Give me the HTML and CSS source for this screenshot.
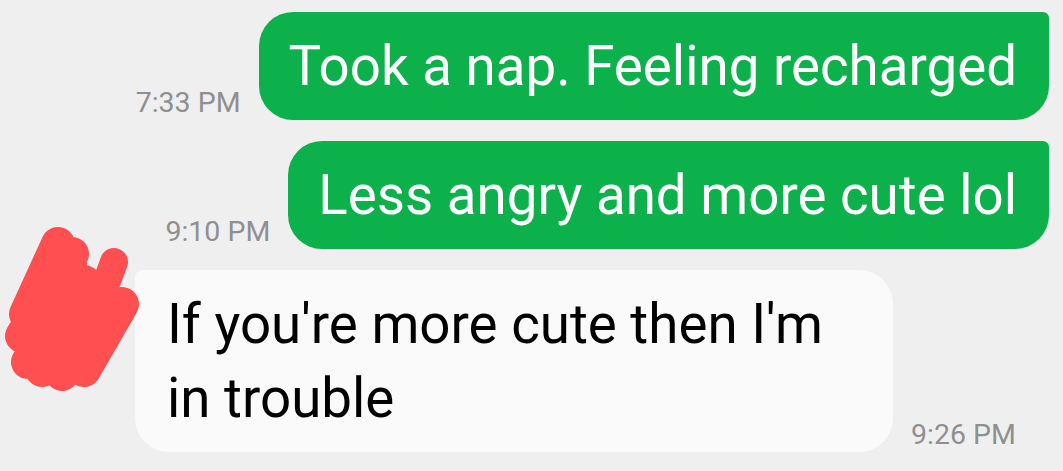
FILE: index.html
```html
<!DOCTYPE html>
<html lang="en">
<head>
    <meta charset="UTF-8">
    <title>Chat</title>
    <link rel="stylesheet" href="styles.css">
</head>
<body>
<div class="chat">
    <div class="row out">
        <span class="time">7:33 PM</span>
        <div class="bubble sent">Took a nap. Feeling recharged</div>
    </div>
    <div class="row out">
        <span class="time">9:10 PM</span>
        <div class="bubble sent">Less angry and more cute lol</div>
    </div>
    <div class="row in">
        <div class="avatar">
            <svg class="scribble" width="150" height="170" viewBox="0 0 150 170">
                <g fill="none" stroke="#ff4f50" stroke-linecap="round" stroke-linejoin="round">
                    <path stroke-width="34" d="M26 90 L58 20 M22 112 L72 30 M28 138 L84 58 M42 146 L96 72 M62 150 L108 92 M84 146 L122 80 M40 60 L70 40"/>
                    <path stroke-width="28" d="M88 108 L114 38"/>
                </g>
            </svg>
        </div>
        <div class="bubble received">If you're more cute then I'm in trouble</div>
        <span class="time">9:26 PM</span>
    </div>
</div>
</body>
</html>
```

FILE: styles.css
```css
body {
    margin: 0;
    padding: 0;
    background-color: #f0eff0;
    font-family: Roboto, "Noto Sans", sans-serif;
    width: 1063px;
    height: 471px;
    overflow: hidden;
}

.chat {
    display: flex;
    flex-direction: column;
    gap: 21px;
    padding: 12px 14px 0 0;
}

.row {
    display: flex;
    align-items: flex-end;
    gap: 18px;
}

.row.out {
    justify-content: flex-end;
}

.time {
    color: #8f8f8f;
    font-size: 28.5px;
    line-height: 30px;
    margin-bottom: 2px;
    white-space: nowrap;
}

.bubble {
    font-size: 54.7px;
}

.sent {
    background-color: #0cb14c;
    color: #ffffff;
    padding: 0 32px 0 30px;
    border-radius: 34px 6px 34px 34px;
    height: 108px;
    line-height: 108px;
}

.in {
    position: relative;
    padding-left: 135px;
}

.avatar {
    position: absolute;
    left: 0;
    top: -46px;
    width: 150px;
    height: 170px;
}

.scribble {
    display: block;
}

.received {
    background-color: #fbfafb;
    color: #000000;
    width: 694px;
    padding: 17px 32px 17px 32px;
    line-height: 74px;
    border-radius: 8px 34px 34px 34px;
}
```
